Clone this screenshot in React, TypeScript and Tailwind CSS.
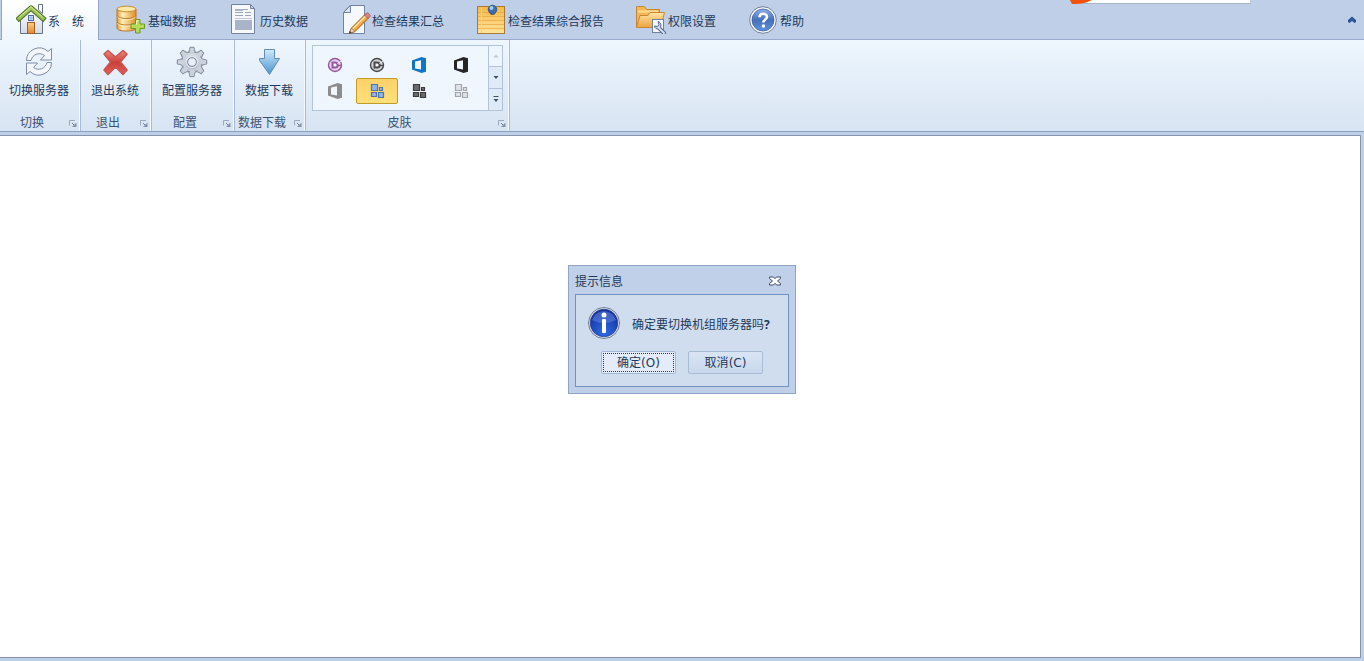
import React, { useState } from "react";

type IconProps = { className?: string };

const HomeIcon = ({ className = "size-8" }: IconProps) => (
  <svg viewBox="0 0 32 32" className={className} aria-hidden="true">
    <defs>
      <linearGradient id="doorFill" x1="0" y1="0" x2="0" y2="1">
        <stop offset="0" stopColor="#fbd08a" />
        <stop offset="1" stopColor="#e2872c" />
      </linearGradient>
      <linearGradient id="wallFill" x1="0" y1="0" x2="0" y2="1">
        <stop offset="0" stopColor="#ffffff" />
        <stop offset="1" stopColor="#d5dae4" />
      </linearGradient>
    </defs>
    <path d="M4.500 15 15 5.500 26.500 15V31.500H4.500Z" fill="url(#wallFill)" stroke="#66728c" />
    <path d="M22.500 2.500h4v9l-4-3.500Z" fill="#fff" stroke="#66728c" />
    <path d="M3 16.500 15 6l12 10.500" fill="none" stroke="#4f6b26" strokeWidth="5.200" strokeLinejoin="round" strokeLinecap="square" />
    <path d="M3 16.500 15 6l12 10.500" fill="none" stroke="#9cc455" strokeWidth="3.200" strokeLinecap="square" />
    <path d="M3.500 15 15 4.800l11.500 10.200" fill="none" stroke="#d4e9a8" />
    <rect x="12.500" y="13.500" width="5" height="5" fill="#cfe0fa" stroke="#4f6da5" />
    <path d="M15 14v4M13 16h4" stroke="#7f9fd6" strokeWidth=".6" />
    <rect x="11.500" y="20.500" width="7" height="11" fill="url(#doorFill)" stroke="#a85c22" />
  </svg>
);

const DatabaseIcon = ({ className = "size-8" }: IconProps) => (
  <svg viewBox="0 0 32 32" className={className} aria-hidden="true">
    <defs>
      <linearGradient id="dbFill">
        <stop offset="0" stopColor="#e8992f" />
        <stop offset=".3" stopColor="#fff0ba" />
        <stop offset="1" stopColor="#df8d24" />
      </linearGradient>
    </defs>
    <path d="M1 7v19c0 2 4 3 9.500 3S20 28 20 26V7Z" fill="url(#dbFill)" stroke="#bd7326" />
    <ellipse cx="10.500" cy="7" rx="9.500" ry="2.800" fill="#ffe9a9" stroke="#d28a31" />
    <path d="M1 13.500c1 2 5 3 9.500 3s8.500-1 9.500-3M1 20c1 2 5 3 9.500 3s8.500-1 9.500-3" fill="none" stroke="#bd7326" />
    <path d="M1.500 14.700c1 2 5 3 9 3s8-1 9-3M1.500 21.200c1 2 5 3 9 3s8-1 9-3" fill="none" stroke="#fff4cf" strokeWidth=".8" />
    <path d="M19.500 17.500h4.500v4.500h4.500v4.500H24v4.500h-4.500v-4.500H15V22h4.500Z" fill="#b5dc55" stroke="#6c962b" strokeLinejoin="round" />
    <path d="M20.500 22.700v-4.200h2" fill="none" stroke="#e9f8bf" />
  </svg>
);

const DocumentIcon = ({ className = "size-8" }: IconProps) => (
  <svg viewBox="0 0 32 32" className={className} aria-hidden="true">
    <path d="M3.500 2.500h19l4 4v25h-23Z" fill="#f6f8fc" stroke="#7483a0" />
    <path d="M22.500 2.500v4h4Z" fill="#cbd4e6" stroke="#7483a0" />
    <path d="M7 7.500h13M7 10.500h8M17 10.500h6M7 13.500h8M17 13.500h6" stroke="#9aa7be" />
    <path d="M7 7h8v2H7zM7 18h17v10H7z" fill="#a9b4c9" />
    <path d="M7 16.500h17" stroke="#bdc7d8" />
  </svg>
);

const EditIcon = ({ className = "size-8" }: IconProps) => (
  <svg viewBox="0 0 32 32" className={className} aria-hidden="true">
    <path d="M10 3.500h14.500v28H3.500V10.500Z" fill="#f5f8fd" stroke="#7483a0" />
    <path d="M10.500 3.500v7h-7Z" fill="#dbe4f2" stroke="#7483a0" strokeLinejoin="round" />
    <path d="M9 31.500 11.500 26 25 12.500l3.500 3.500L15 29.500Z" fill="#f5a94a" stroke="#8f5b20" strokeLinejoin="round" />
    <path d="M12.500 27 26 13.500" stroke="#ffe3a0" strokeWidth="1.500" />
    <path d="m24.500 13 2-2c1-1 4.500 2 3.500 3.500l-2 2Z" fill="#d8848a" stroke="#91545d" strokeWidth=".8" />
    <path d="m9 31.500 2.500-5.500 3.500 3.500Z" fill="#efd6b0" stroke="#8f5b20" strokeWidth=".6" />
    <path d="m9 31.500 1-2.500 1.500 1.500Z" fill="#333" />
  </svg>
);

const NoteIcon = ({ className = "size-8" }: IconProps) => (
  <svg viewBox="0 0 32 32" className={className} aria-hidden="true">
    <defs>
      <linearGradient id="noteFill" x1="0" y1="0" x2="0" y2="1">
        <stop offset="0" stopColor="#f5b849" />
        <stop offset="1" stopColor="#ffe49a" />
      </linearGradient>
    </defs>
    <rect x="1.500" y="4.500" width="27" height="27" fill="url(#noteFill)" stroke="#a77a3a" />
    <path d="M2 10.500h26M2 14.500h26M2 18.500h26M2 22.500h26M2 26.500h26" stroke="#e9ac48" strokeWidth=".8" />
    <path d="M5.500 5v26" stroke="#f5cf82" />
    <circle cx="16.500" cy="7.500" r="4.300" fill="#3d6db0" stroke="#254e86" strokeWidth=".8" />
    <circle cx="15.500" cy="6" r="2" fill="#a6cbf2" />
    <path d="M13.500 11c2 2 4 2 6 0" stroke="#274b7d" fill="none" />
  </svg>
);

const FolderIcon = ({ className = "size-8" }: IconProps) => (
  <svg viewBox="0 0 32 32" className={className} aria-hidden="true">
    <defs>
      <linearGradient id="folderFill" x1="0" y1="0" x2="0" y2="1">
        <stop offset="0" stopColor="#ffe5a5" />
        <stop offset="1" stopColor="#eda33e" />
      </linearGradient>
    </defs>
    <path d="M.500 25V4.500h8l2.500 3H23.500v17Z" fill="#f3b757" stroke="#c78835" />
    <path d="M2 9.500h20" stroke="#ffdc92" strokeWidth="2" />
    <path d="M.500 25.500 4 13.500h8l2-3h14.500l-4 15Z" fill="url(#folderFill)" stroke="#c78835" strokeLinejoin="round" />
    <rect x="16.500" y="17.500" width="11" height="13" fill="#f5f8fd" stroke="#7381a0" />
    <path d="m22.500 25.500 5.500 5.500" stroke="#566989" strokeWidth="4" strokeLinecap="round" />
    <path d="M22 19.500c3.500 1 4 5.500 1 7-2.500 1-4.500-.500-4.500-2.500l3 .500 1.500-1.800Z" fill="#c7d4e8" stroke="#566989" strokeLinejoin="round" />
    <path d="m22.500 25.500 5.500 5.500" stroke="#d3dded" strokeWidth="2" strokeLinecap="round" />
  </svg>
);

const HelpIcon = ({ className = "size-8" }: IconProps) => (
  <svg viewBox="0 0 32 32" className={className} aria-hidden="true">
    <defs>
      <linearGradient id="helpFill" x1="0" y1="0" x2="0" y2="1">
        <stop offset="0" stopColor="#8fb0e6" />
        <stop offset=".5" stopColor="#4570bd" />
        <stop offset="1" stopColor="#5f93dc" />
      </linearGradient>
    </defs>
    <circle cx="15" cy="18" r="13.300" fill="#f8faff" stroke="#707d99" />
    <circle cx="15" cy="18" r="11" fill="url(#helpFill)" stroke="#3f61a2" strokeWidth=".8" />
    <path d="M11.500 15.200c0-4.700 7.500-4.500 7.500-.400 0 2.600-3.600 2.700-3.600 5.700" fill="none" stroke="#fff" strokeWidth="2.600" />
    <circle cx="15.400" cy="24" r="1.700" fill="#fff" />
  </svg>
);

const RefreshIcon = ({ className = "size-8" }: IconProps) => (
  <svg viewBox="0 0 32 32" className={className} aria-hidden="true">
    <g fill="#f3f6fc" stroke="#808ca8" strokeLinejoin="round">
      <path d="M3.500 14.500A12.700 12.700 0 0 1 25 5.500l3.500-3V14H17.500l4-4.500A8.500 8.500 0 0 0 8 14.500Z" />
      <path d="M28.500 16.500A12.700 12.700 0 0 1 7 25.500l-3.500 3V17H14.500l-4 4.500A8.500 8.500 0 0 0 24 16.500Z" />
    </g>
  </svg>
);

const CrossIcon = ({ className = "size-8" }: IconProps) => (
  <svg viewBox="0 0 32 32" className={className} aria-hidden="true">
    <defs>
      <linearGradient id="crossFill" x1="0" y1="0" x2="0" y2="1">
        <stop offset="0" stopColor="#ee8a7c" />
        <stop offset=".5" stopColor="#cb3f38" />
        <stop offset="1" stopColor="#e2625a" />
      </linearGradient>
    </defs>
    <path d="M9 4.500 16.500 11 24 4.500l4 3.500-6.500 8 6.500 8-4 4.500L16.500 21 9 28.500 5 24l6.500-8L5 8Z" fill="url(#crossFill)" stroke="#c9564f" strokeWidth="1.600" strokeLinejoin="round" />
  </svg>
);

const TEETH = [0, 45, 90, 135, 180, 225, 270, 315];

const GearIcon = ({ className = "size-8" }: IconProps) => (
  <svg viewBox="0 0 32 32" className={className} aria-hidden="true">
    <defs>
      <linearGradient id="gearFill" x1="0" y1="0" x2="0" y2="1">
        <stop offset="0" stopColor="#dfe3ea" />
        <stop offset="1" stopColor="#b3bac8" />
      </linearGradient>
    </defs>
    <g fill="#ccd2dc" stroke="#7e899c">
      {TEETH.map((a) => (
        <path key={a} d="M10.500 7.500c3-1 2.800-3.500 3.500-6.200h4c.7 2.700.5 5.200 3.500 6.200Z" strokeLinejoin="round" transform={`rotate(${a} 16 16)`} />
      ))}
    </g>
    <circle cx="16" cy="16" r="9.800" fill="url(#gearFill)" />
    <g fill="#ccd2dc">
      {TEETH.map((a) => (
        <path key={a} d="M12 8.500c2.500-1.200 2.300-4 2.700-6.500h2.600c.4 2.500.2 5.300 2.700 6.500Z" transform={`rotate(${a} 16 16)`} />
      ))}
    </g>
    <circle cx="16" cy="16" r="4.300" fill="#eaf1fa" stroke="#7e899c" />
    <circle cx="16" cy="16" r="5.800" fill="none" stroke="#e3e7ee" />
  </svg>
);

const DownloadIcon = ({ className = "size-8" }: IconProps) => (
  <svg viewBox="0 0 32 32" className={className} aria-hidden="true">
    <defs>
      <linearGradient id="downFill" x1="0" y1="0" x2="0" y2="1">
        <stop offset="0" stopColor="#d3eafb" />
        <stop offset="1" stopColor="#4a93cf" />
      </linearGradient>
    </defs>
    <path d="M11.500 3.500h10v9h5L16.500 28.500 6.500 14.500v-2h5Z" fill="url(#downFill)" stroke="#5f8db8" strokeLinejoin="round" />
  </svg>
);

const InfoIcon = ({ className = "size-8" }: IconProps) => (
  <svg viewBox="0 0 32 32" className={className} aria-hidden="true">
    <defs>
      <radialGradient id="infoFill" cx=".5" cy=".85" r=".8">
        <stop offset="0" stopColor="#2f6be6" />
        <stop offset="1" stopColor="#15309a" />
      </radialGradient>
    </defs>
    <circle cx="16" cy="16" r="15.500" fill="#e3e7ef" stroke="#6d7a94" />
    <circle cx="16" cy="16" r="13.800" fill="url(#infoFill)" stroke="#1b2f80" strokeWidth=".6" />
    <path d="M4 13a12.500 12.500 0 0 1 24 0c-7 4-17 4-24 0Z" fill="#7d9af0" opacity=".4" />
    <circle cx="16" cy="8" r="2.500" fill="#fff" />
    <rect x="14" y="12" width="4" height="14" rx="1" fill="#fff" />
  </svg>
);

const LauncherIcon = () => (
  <svg viewBox="0 0 9 9" className="size-[9px]" aria-hidden="true">
    <path d="M1.500 6.500V1.500H7" fill="none" stroke="#9aa9be" />
    <path d="M4 4l2 2" fill="none" stroke="#71839e" />
    <path d="M4 8h4.500V3.500Z" fill="#8292ab" />
  </svg>
);

const RoundSkin = ({ tone }: { tone: string }) => (
  <svg viewBox="0 0 16 16" className="size-4" aria-hidden="true">
    <circle cx="8" cy="8" r="6.500" fill={tone} fillOpacity=".2" stroke={tone} strokeWidth="1.400" />
    <path d="M5.500 5.500h2.700c3.300 0 3.300 5 0 5H5.500Z" fill="#eef5fd" stroke={tone} strokeWidth="2" />
    <path d="M10 8.500h4" stroke={tone} strokeWidth="1.400" />
    <path d="m10.500 6.500 4-2.500" stroke="#eef5fd" strokeWidth="1" />
  </svg>
);

const OfficeSkin = ({ tone }: { tone: string }) => (
  <svg viewBox="0 0 16 16" className="size-4" aria-hidden="true">
    <path fillRule="evenodd" d="M1 3.500 10.500 0 15 1.300v13.400L10.500 16 1 12.500ZM4 4.500v7l6 1V3.200Z" fill={tone} />
  </svg>
);

const TileSkin = ({ fill, stroke }: { fill: string; stroke: string }) => (
  <svg viewBox="0 0 16 16" className="size-4" aria-hidden="true">
    <path
      d="M2.500 1.500h6v6h-6zM10.500 4.500h3v3h-3zM2.500 9.500h5v4h-5zM9.500 9.500h5v5h-5z"
      fill={fill}
      stroke={stroke}
      strokeWidth="1.200"
    />
  </svg>
);

const tabs = [
  { label: "系　统", Icon: HomeIcon },
  { label: "基础数据", Icon: DatabaseIcon },
  { label: "历史数据", Icon: DocumentIcon },
  { label: "检查结果汇总", Icon: EditIcon },
  { label: "检查结果综合报告", Icon: NoteIcon },
  { label: "权限设置", Icon: FolderIcon },
  { label: "帮助", Icon: HelpIcon },
];

const skins = [
  { name: "紫色圆形", icon: <RoundSkin tone="#9a559f" /> },
  { name: "深色圆形", icon: <RoundSkin tone="#4a4a4a" /> },
  { name: "蓝色", icon: <OfficeSkin tone="#0f73c6" /> },
  { name: "黑色", icon: <OfficeSkin tone="#262626" /> },
  { name: "灰色", icon: <OfficeSkin tone="#8c8c8c" /> },
  { name: "蓝色方块", icon: <TileSkin fill="#8fb4ea" stroke="#5574a6" /> },
  { name: "黑色方块", icon: <TileSkin fill="#6b6b6b" stroke="#3c3c3c" /> },
  { name: "银色方块", icon: <TileSkin fill="#dfe2e6" stroke="#a2a6ad" /> },
];

function Group({ title, width, children }: { title: string; width: string; children: React.ReactNode }) {
  return (
    <section
      aria-label={title}
      className={`${width} flex flex-col border-r border-[#a8bbd3] shadow-[inset_-1px_0_0_#f4f9ff]`}
    >
      <div className="flex flex-1 justify-center pt-[5px]">{children}</div>
      <footer className="flex h-4 items-center">
        <h2 className="flex-1 text-center leading-4 whitespace-nowrap text-[#3b5274]">{title}</h2>
        <button type="button" aria-label={`${title}选项`} className="flex w-4 shrink-0 justify-center">
          <LauncherIcon />
        </button>
      </footer>
    </section>
  );
}

function LargeButton({ label, icon }: { label: string; icon: React.ReactNode }) {
  return (
    <button
      type="button"
      className="mt-px mr-0.5 flex flex-col items-center gap-[5px] self-start leading-4 whitespace-nowrap"
    >
      {icon}
      <span>{label}</span>
    </button>
  );
}

export default function App() {
  const [tab, setTab] = useState(0);
  const [skin, setSkin] = useState(5);
  const [open, setOpen] = useState(true);

  return (
    <div className="relative flex h-screen flex-col bg-[#bfcfe7] font-['Noto_Sans','Noto_Sans_CJK_SC',sans-serif] text-xs text-[#1e395b]">
      <header className="flex h-10 shrink-0 items-stretch border-b border-[#98aac7]">
        <nav role="tablist" aria-label="功能区" className="flex flex-1">
          {tabs.map(({ label, Icon }, i) => (
            <button
              key={label}
              type="button"
              role="tab"
              aria-selected={i === tab}
              onClick={() => setTab(i)}
              className={
                i === tab
                  ? "mx-px -mb-px flex items-start border border-y-0 border-[#93a7c5] bg-linear-to-b from-white to-[#eff6fe] px-3.5 whitespace-nowrap"
                  : "mx-px flex items-start border border-y-0 border-transparent px-3.5 whitespace-nowrap"
              }
            >
              <Icon className="mt-0.5 size-8 shrink-0" />
              <span className="mt-3.5 leading-4">{label}</span>
            </button>
          ))}
        </nav>
        <button type="button" aria-label="折叠功能区" className="flex w-6 items-center justify-center">
          <svg viewBox="0 0 10 8" className="h-2 w-2.5" aria-hidden="true">
            <path d="M1 6V4L5 .500 9 4v2L7.500 7 5 5 2.500 7Z" fill="#2f5597" />
          </svg>
        </button>
      </header>

      <svg viewBox="0 0 182 5" className="absolute top-0 right-[112px] h-[5px] w-[182px]" aria-hidden="true">
        <path d="M10 3.500h171" stroke="#a9b5c8" />
        <path d="M14 0h166v3H14Z" fill="#fff" />
        <path d="M0 0h22c-6 3-12 4.500-20 4Z" fill="#f4510b" />
      </svg>

      <div className="flex h-[92px] shrink-0 border-b border-[#8ba0bd] bg-linear-to-b from-[#eef6fe] to-[#d8e4f3]">
        <Group title="切换" width="w-[81px]">
          <LargeButton label="切换服务器" icon={<RefreshIcon />} />
        </Group>
        <Group title="退出" width="w-[71px]">
          <LargeButton label="退出系统" icon={<CrossIcon />} />
        </Group>
        <Group title="配置" width="w-[83px]">
          <LargeButton label="配置服务器" icon={<GearIcon />} />
        </Group>
        <Group title="数据下载" width="w-[71px]">
          <LargeButton label="数据下载" icon={<DownloadIcon />} />
        </Group>
        <Group title="皮肤" width="w-[204px]">
          <div className="flex h-[66px] border border-[#b3c3da] bg-[#f0f6fe]">
            <div className="grid grid-cols-4 content-center pr-1.5 pl-px">
              {skins.map((s, i) => (
                <button
                  key={s.name}
                  type="button"
                  aria-label={s.name}
                  aria-pressed={i === skin}
                  onClick={() => setSkin(i)}
                  className={
                    i === skin
                      ? "flex h-[26px] w-[42px] items-center justify-center rounded-xs border border-[#c29b29] bg-linear-to-b from-[#fcd16a] to-[#ffe07a]"
                      : "flex h-[26px] w-[42px] items-center justify-center rounded-xs border border-transparent"
                  }
                >
                  {s.icon}
                </button>
              ))}
            </div>
            <div className="grid w-3.5 grid-rows-3 divide-y divide-[#b3c3da] border-l border-[#b3c3da] bg-[#dfeaf7]">
              <button type="button" aria-label="向上滚动" disabled className="flex items-center justify-center bg-[#eef5fd]">
                <svg viewBox="0 0 6 6" className="size-1.5" aria-hidden="true">
                  <path d="M0 4.500h6l-3-3Z" fill="#c3cddb" />
                </svg>
              </button>
              <button type="button" aria-label="向下滚动" className="flex items-center justify-center">
                <svg viewBox="0 0 6 6" className="size-1.5" aria-hidden="true">
                  <path d="M.5 2h5L3 5Z" fill="#3d4f6b" />
                </svg>
              </button>
              <button type="button" aria-label="更多皮肤" className="flex items-center justify-center">
                <svg viewBox="0 0 6 6" className="size-1.5" aria-hidden="true">
                  <path d="M.5 0h5v1h-5zM.5 3h5L3 6Z" fill="#3d4f6b" />
                </svg>
              </button>
            </div>
          </div>
        </Group>
      </div>

      <main className="mt-[3px] mr-[3px] mb-[3px] flex-1 border border-l-0 border-[#8496ad] bg-white" />

      {open && (
        <div className="absolute inset-0 flex items-center justify-center pb-0.5">
          <div
            role="dialog"
            aria-labelledby="dialog-title"
            className="w-[228px] border border-[#8fa5c6] bg-[#bfd0e8] px-1.5 pb-1.5"
          >
            <div className="flex h-7 items-end justify-between pr-2 pb-1">
              <h1 id="dialog-title" className="leading-4">提示信息</h1>
              <button type="button" aria-label="关闭" onClick={() => setOpen(false)} className="pb-1">
                <svg viewBox="0 0 12 10" className="h-2.5 w-3" aria-hidden="true">
                  <path d="M.5 1h4L6 2.700 7.500 1h4v1.500L8.500 5l3 2.500V9h-4L6 7.300 4.500 9h-4V7.500l3-2.500-3-2.500Z" fill="#fff" stroke="#3f4f69" strokeLinejoin="round" />
                </svg>
              </button>
            </div>
            <div className="border border-[#6f92c1] bg-[#cfddee] px-3 pt-3 pb-3">
              <div className="flex items-center gap-3">
                <InfoIcon className="size-8 shrink-0" />
                <p className="pt-1 leading-4 whitespace-nowrap">确定要切换机组服务器吗<b>?</b></p>
              </div>
              <div className="mt-3 flex justify-center gap-3">
                <button
                  type="button"
                  onClick={() => setOpen(false)}
                  className="h-[23px] w-[75px] rounded-xs border border-[#a3b8d6] bg-[#e3ecf8] p-px"
                >
                  <span className="flex h-full items-center justify-center border border-dotted border-[#1e395b] pt-px leading-4">
                    确定<span className="font-['DejaVu_Sans']">(O)</span>
                  </span>
                </button>
                <button
                  type="button"
                  onClick={() => setOpen(false)}
                  className="flex h-[23px] w-[75px] items-center justify-center rounded-xs border border-[#a9bbd5] bg-linear-to-b from-[#d9e5f4] to-[#c9d8ec] pt-px leading-4"
                >
                  取消<span className="font-['DejaVu_Sans']">(C)</span>
                </button>
              </div>
            </div>
          </div>
        </div>
      )}
    </div>
  );
}
